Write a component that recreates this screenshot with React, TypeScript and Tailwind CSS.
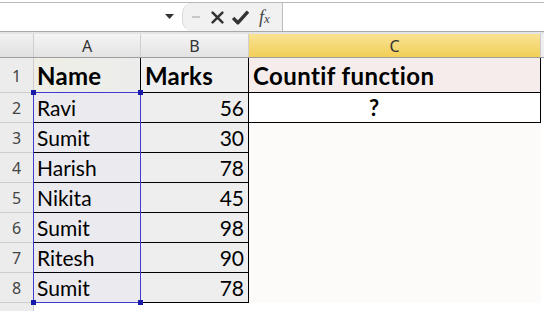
import React from "react";

const rows: [string, number][] = [
  ["Ravi", 56],
  ["Sumit", 30],
  ["Harish", 78],
  ["Nikita", 45],
  ["Sumit", 98],
  ["Ritesh", 90],
  ["Sumit", 78],
];

const font = { fontFamily: "Lato, 'Open Sans', sans-serif" };

function Dot({ className }: { className: string }) {
  return <div className={`absolute w-[5px] h-[5px] bg-[#1a1aa8] ${className}`} />;
}

export default function App() {
  return (
    <div className="w-[544px] h-[311px] overflow-hidden bg-white relative" style={font}>
      {/* formula bar */}
      <div className="h-[3px] border-b border-[#b8b8b8] bg-white" />
      <div className="flex h-[29px] border-b border-[#a9a9a9]">
        <div className="w-[182px] flex items-center justify-end pr-[8px] bg-white">
          <svg width="9" height="6" viewBox="0 0 9 6">
            <path d="M0 0 L9 0 L4.5 5 Z" fill="#333" />
          </svg>
        </div>
        <div className="w-[100px] flex items-center bg-[#f1f1f1] rounded-l-[10px] border-l border-[#d8d8d8] relative">
          <div className="w-[8px] h-[2px] bg-[#c8c8c8] ml-[9px]" />
          <svg className="ml-[11px]" width="13" height="13" viewBox="0 0 12 12">
            <path d="M1.5 1.5 L10.5 10.5 M10.5 1.5 L1.5 10.5" stroke="#333" strokeWidth="2.3" strokeLinecap="round" />
          </svg>
          <svg className="ml-[8px]" width="17" height="15" viewBox="0 0 16 14">
            <path d="M1 7.5 L5.5 12 L15 1.5" stroke="#333" strokeWidth="3.2" fill="none" strokeLinejoin="round" />
          </svg>
          <span className="ml-[10px] text-[18px] italic text-[#444] leading-none" style={{ fontFamily: "'Liberation Serif', serif" }}>
            f<span className="text-[13px]">x</span>
          </span>
        </div>
        <div className="flex-1 bg-white border-l border-[#bdbdbd]" />
      </div>
      <div className="h-[2px] bg-[#e4e4e4]" />
      {/* column header */}
      <div className="flex h-[24px] border-b border-[#9e9e9e] text-[16px] text-[#333]" style={{ fontFamily: "'Noto Sans', sans-serif" }}>
        <div className="w-[34px] bg-gradient-to-b from-[#f2f2f2] to-[#e0e0e0] border-r border-[#cfcfcf]" />
        <div className="w-[107px] flex items-center justify-center bg-gradient-to-b from-[#f5f5f5] to-[#e3e3e3] border-r border-[#cfcfcf]">A</div>
        <div className="w-[108px] flex items-center justify-center bg-gradient-to-b from-[#f5f5f5] to-[#e3e3e3] border-r border-[#cfcfcf]">B</div>
        <div className="w-[292px] flex items-center justify-center bg-gradient-to-b from-[#f9e394] to-[#f2cf55] border-r border-[#c9c9c9]">C</div>
        <div className="flex-1 bg-[#f0f0f0]" />
      </div>
      {/* header row 1 */}
      <div className="flex h-[35px]">
        <div className="w-[34px] bg-[#ececec] border-r border-b border-[#cdcdcd] flex items-center justify-center pt-[2px] text-[16px] text-[#444]" style={{ fontFamily: "'Noto Sans', sans-serif" }}>1</div>
        <div className="w-[107px] bg-gradient-to-r from-[#efefe6] to-[#ececec] border-r border-b border-black flex items-center pl-[3px] pt-[2px] text-[24px] font-bold text-black tracking-[0.3px]">Name</div>
        <div className="w-[108px] bg-[#efefef] border-r border-b border-black flex items-center pl-[4px] pt-[2px] text-[24px] font-bold text-black tracking-[0.2px]">Marks</div>
        <div className="w-[292px] bg-[#f6ecec] border-r border-b border-black flex items-center pl-[4px] pt-[2px] text-[24px] font-bold text-black tracking-[0.4px]">Countif function</div>
        <div className="flex-1 bg-white" />
      </div>
      {rows.map(([name, mark], i) => (
        <div key={i} className="flex h-[30px]">
          <div className="w-[34px] bg-[#ececec] border-r border-b border-[#cdcdcd] flex items-center justify-center text-[16px] text-[#444]" style={{ fontFamily: "'Noto Sans', sans-serif" }}>{i + 2}</div>
          <div className="w-[107px] bg-[#ebebef] border-r border-b border-black flex items-center pl-[3px] text-[21px] text-black">{name}</div>
          <div className="w-[108px] bg-[#eeeeee] border-r border-b border-black flex items-center justify-end pr-[4px] text-[21px] text-black">{mark}</div>
          {i === 0 ? (
            <div className="w-[292px] bg-white border-r border-b border-black flex items-center pl-[120px] text-[22px] font-bold text-black">?</div>
          ) : (
            <div className="w-[292px] bg-[#fdfafa]" />
          )}
          <div className="flex-1 bg-white" />
        </div>
      ))}
      <div className="flex h-[20px]">
        <div className="w-[34px] bg-[#ececec] border-r border-[#cdcdcd]" />
        <div className="flex-1 bg-white" />
      </div>
      {/* selection overlay A2:A8 */}
      <div className="absolute left-[33px] top-[92px] w-[108px] h-[211px] border border-[#3c3cd0] pointer-events-none">
        <Dot className="-left-[3px] -top-[3px]" />
        <Dot className="-right-[3px] -top-[3px]" />
        <Dot className="-left-[3px] -bottom-[3px]" />
        <Dot className="-right-[3px] -bottom-[3px]" />
      </div>
    </div>
  );
}
